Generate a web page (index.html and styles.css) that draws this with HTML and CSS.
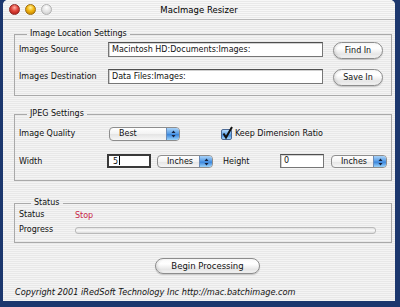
FILE: index.html
```html
<!DOCTYPE html>
<html lang="en">
<head>
    <meta charset="UTF-8">
    <title>MacImage Resizer</title>
    <link rel="stylesheet" href="styles.css">
</head>
<body>
    <div class="window">
        <div class="titlebar">
            <div class="lights">
                <span class="light red"></span>
                <span class="light yellow"></span>
                <span class="light off"></span>
            </div>
            <div class="title">MacImage Resizer</div>
            <div></div>
        </div>

        <div class="content">
            <fieldset class="group location">
                <legend>Image Location Settings</legend>
                <div class="row">
                    <span class="label">Images Source</span>
                    <div class="field path">Macintosh HD:Documents:Images:</div>
                    <button class="btn small">Find In</button>
                </div>
                <div class="row">
                    <span class="label">Images Destination</span>
                    <div class="field path">Data Files:Images:</div>
                    <button class="btn small">Save In</button>
                </div>
            </fieldset>

            <fieldset class="group jpeg">
                <legend>JPEG Settings</legend>
                <div class="row">
                    <span class="label quality">Image Quality</span>
                    <div class="popup best">
                        <span class="popup-text">Best</span>
                        <span class="popup-arrows">
                            <svg width="5" height="8" viewBox="0 0 5 8"><path d="M2.5 0.5 L4.5 3 H0.5 Z M2.5 7.5 L4.5 5 H0.5 Z" fill="#17233f"/></svg>
                        </span>
                    </div>
                    <label class="check">
                        <span class="checkbox">
                            <svg width="13" height="14" viewBox="0 0 13 14"><path d="M2.5 7.5 L5 11.5 L11 1" fill="none" stroke="#111" stroke-width="2"/></svg>
                        </span>
                        Keep Dimension Ratio
                    </label>
                </div>
                <div class="row size">
                    <span class="label width-label">Width</span>
                    <div class="field num focused">5<span class="caret"></span></div>
                    <div class="popup unit first">
                        <span class="popup-text">Inches</span>
                        <span class="popup-arrows">
                            <svg width="5" height="8" viewBox="0 0 5 8"><path d="M2.5 0.5 L4.5 3 H0.5 Z M2.5 7.5 L4.5 5 H0.5 Z" fill="#17233f"/></svg>
                        </span>
                    </div>
                    <span class="label height-label">Height</span>
                    <div class="field num">0</div>
                    <div class="popup unit second">
                        <span class="popup-text">Inches</span>
                        <span class="popup-arrows">
                            <svg width="5" height="8" viewBox="0 0 5 8"><path d="M2.5 0.5 L4.5 3 H0.5 Z M2.5 7.5 L4.5 5 H0.5 Z" fill="#17233f"/></svg>
                        </span>
                    </div>
                </div>
            </fieldset>

            <fieldset class="group status">
                <legend>Status</legend>
                <div class="row line">
                    <span class="label status-label">Status</span>
                    <span class="stop">Stop</span>
                </div>
                <div class="row line">
                    <span class="label status-label">Progress</span>
                    <div class="progress"></div>
                </div>
            </fieldset>

            <button class="btn begin">Begin Processing</button>

            <p class="copyright">Copyright 2001 iRedSoft Technology Inc http://mac.batchimage.com</p>
        </div>
    </div>
</body>
</html>
```

FILE: styles.css
```css
* {
    box-sizing: border-box;
}

body {
    margin: 0;
    background: #1c376e;
    font-family: "DejaVu Sans", sans-serif;
    font-size: 8px;
    color: #111;
}

.window {
    margin-left: 3px;
    width: 392px;
    height: 301px;
    border-radius: 5px 5px 0 0;
    overflow: hidden;
    background: repeating-linear-gradient(#f4f4f4 0, #f4f4f4 1px, #e8e8e8 1px, #e8e8e8 2px);
}

.titlebar {
    height: 20px;
    display: grid;
    grid-template-columns: 1fr auto 1fr;
    align-items: center;
    padding: 0 6px;
    border-bottom: 1px solid #b9b9b9;
    background: repeating-linear-gradient(#f7f7f7 0, #f7f7f7 1px, #e9e9e9 1px, #e9e9e9 2px);
}

.lights {
    display: flex;
    gap: 5px;
}

.light {
    width: 11px;
    height: 11px;
    border-radius: 50%;
}

.light.red {
    background: radial-gradient(circle at 50% 30%, #ffb3a8 0, #e0443a 45%, #a3120f 100%);
    border: 1px solid #8e2a25;
}

.light.yellow {
    background: radial-gradient(circle at 50% 30%, #fff2a0 0, #f2b50f 45%, #b77400 100%);
    border: 1px solid #9c6d10;
}

.light.off {
    background: radial-gradient(circle at 50% 30%, #ffffff 0, #e4e4e4 50%, #c8c8c8 100%);
    border: 1px solid #b0b0b0;
}

.title {
    font-size: 8.5px;
    color: #000;
}

.content {
    padding: 9px 3px 0 11px;
}

.group {
    margin: 0;
    min-width: 0;
    border: 1px solid #a9a9a9;
    padding: 3px 4px 9px;
}

.group legend {
    margin-left: 8px;
    padding: 0 3px;
    line-height: 10px;
    font-size: 8px;
}

.row {
    display: flex;
    align-items: flex-start;
}

.label {
    line-height: 15px;
}

.location .label {
    width: 89px;
}

.location .row + .row {
    margin-top: 10px;
}

.field {
    height: 15px;
    padding: 0 3px;
    background: #fff;
    border: 1px solid #767676;
    border-top-color: #4f4f4f;
    box-shadow: inset 1px 1px 0 #d0d0d0;
    line-height: 13px;
}

.field.path {
    width: 215px;
}

.btn {
    font-family: "DejaVu Sans", sans-serif;
    font-size: 8px;
    color: #111;
    padding: 0;
    border: 1px solid #8c8c8c;
    border-radius: 9px;
    background: linear-gradient(#fafafa, #ffffff 35%, #e6e6e6 75%, #f4f4f4);
    box-shadow: 0 1px 1px rgba(0, 0, 0, 0.18), inset 2px 0 2px rgba(0, 0, 0, 0.08);
}

.btn.small {
    margin-left: 10px;
    width: 50px;
    height: 17px;
}

.jpeg {
    margin-top: 13px;
    padding: 8px 4px 11px;
}

.label.quality {
    width: 90px;
    line-height: 14px;
}

.popup {
    display: flex;
    height: 14px;
    border: 1px solid #8d8d8d;
    border-radius: 4px;
    overflow: hidden;
    background: linear-gradient(#ffffff, #f2f2f2 50%, #e4e4e4 51%, #f6f6f6);
}

.popup-text {
    flex: 1;
    padding-left: 9px;
    line-height: 12px;
}

.popup-arrows {
    width: 13px;
    display: flex;
    align-items: center;
    justify-content: center;
    border-left: 1px solid #6a8bb8;
    background: linear-gradient(#a9d2f8, #5b9fe6 45%, #3a85dc 55%, #9cd4fb);
}

.popup.best {
    width: 71px;
}

.check {
    display: flex;
    align-items: center;
    gap: 3px;
    margin-left: 41px;
    line-height: 14px;
}

.checkbox {
    position: relative;
    width: 11px;
    height: 11px;
    border: 1px solid #4d6a95;
    border-radius: 2px;
    background: linear-gradient(#b6dafa, #5fa2e6 50%, #3d86dc 51%, #a3d6fb);
}

.checkbox svg {
    position: absolute;
    left: -1px;
    top: -4px;
}

.size {
    margin-top: 13px;
}

.label.width-label {
    width: 88px;
}

.field.num {
    width: 44px;
    height: 14px;
    line-height: 12px;
}

.field.focused {
    border: 2px solid #3a3a3a;
    padding-left: 4px;
    line-height: 10px;
    box-shadow: none;
}

.caret {
    display: inline-block;
    width: 1px;
    height: 9px;
    margin-left: 1px;
    vertical-align: -1px;
    background: #000;
}

.popup.unit {
    width: 56px;
    height: 13px;
    margin-top: 1px;
}

.popup.unit .popup-text {
    line-height: 11px;
}

.popup.first {
    margin-left: 6px;
}

.popup.second {
    margin-left: 7px;
}

.label.height-label {
    width: 57px;
    margin-left: 10px;
}

.status {
    margin-top: 17px;
    padding: 2px 4px 7px;
}

.status legend {
    margin-left: 12px;
}

.row.line {
    height: 10px;
    align-items: center;
}

.row.line + .row.line {
    margin-top: 5px;
}

.label.status-label {
    width: 56px;
    line-height: 10px;
}

.stop {
    color: #c81f48;
}

.progress {
    width: 301px;
    height: 7px;
    border: 1px solid #b9b9b9;
    border-radius: 3px;
    background: linear-gradient(#e2e2e2, #f7f7f7 50%, #dcdcdc);
}

.btn.begin {
    display: block;
    margin: 15px 0 0 141px;
    width: 105px;
    height: 16px;
    font-size: 8.5px;
}

.copyright {
    margin: 13px 0 0 1px;
    font-style: italic;
    font-size: 8.2px;
    line-height: 10px;
    color: #111;
}
```
